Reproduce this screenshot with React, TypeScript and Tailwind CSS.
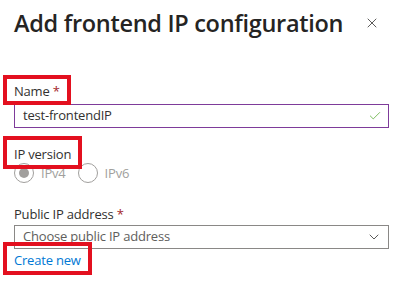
import { Check, ChevronDown, X } from "lucide-react";

function Marked({
  children,
  inset = "-left-[11px] -right-[11px] -top-[8px] -bottom-[5px]",
}: {
  children: React.ReactNode;
  inset?: string;
}) {
  return (
    <span className="relative inline-block">
      {children}
      <span className={`pointer-events-none absolute ${inset} border-[4px] border-[#e3101f]`} />
    </span>
  );
}

function Radio({ label, checked }: { label: string; checked?: boolean }) {
  return (
    <label className="flex items-center gap-[7px] text-[#a19f9d]">
      <span className="flex h-[20px] w-[20px] items-center justify-center rounded-full border border-[#a19f9d]">
        {checked && <span className="h-[10px] w-[10px] rounded-full bg-[#a19f9d]" />}
      </span>
      <span>{label}</span>
    </label>
  );
}

export default function App() {
  return (
    <div
      className="h-[308px] w-[408px] overflow-hidden bg-white text-[13px] tracking-[-0.2px] text-[#323130]"
      style={{ fontFamily: '"Open Sans", "Noto Sans", sans-serif' }}
    >
      <div className="flex items-center justify-between pl-[14px] pr-[28px] pt-[7px]">
        <h1 className="text-[23.5px] leading-[32px] font-semibold tracking-[-0.3px] text-[#252423]">
          Add frontend IP configuration
        </h1>
        <X size={16} strokeWidth={1.2} className="text-[#323130]" />
      </div>

      <div className="px-[14px] pt-[42px]">
        <div className="leading-[20px]">
          <Marked inset="-left-[11px] -right-[11px] -top-[6px] -bottom-[4px]">
            Name <span className="text-[#a4262c]">*</span>
          </Marked>
        </div>
        <div className="mt-[3px] flex h-[24px] w-[375px] items-center justify-between border border-[#7e3b9a] pl-[8px] pr-[6px]">
          <span>test-frontendIP</span>
          <Check size={14} strokeWidth={1.5} className="text-[#6bb34a]" />
        </div>

        <div className="mt-[16px] leading-[20px]">
          <Marked>IP version</Marked>
        </div>
        <div className="-mt-[1px] flex gap-[12px] leading-[20px]">
          <Radio label="IPv4" checked />
          <Radio label="IPv6" />
        </div>

        <div className="mt-[21px] leading-[20px]">
          Public IP address <span className="text-[#a4262c]">*</span>
        </div>
        <div className="mt-[1px] flex h-[24px] w-[375px] items-center justify-between border border-[#8a8886] pl-[8px] pr-[6px]">
          <span className="text-[#605e5c]">Choose public IP address</span>
          <ChevronDown size={16} strokeWidth={1.2} className="text-[#323130]" />
        </div>

        <div className="mt-[1px] leading-[20px]">
          <Marked>
            <span className="text-[#0078d4]">Create new</span>
          </Marked>
        </div>
      </div>
    </div>
  );
}
